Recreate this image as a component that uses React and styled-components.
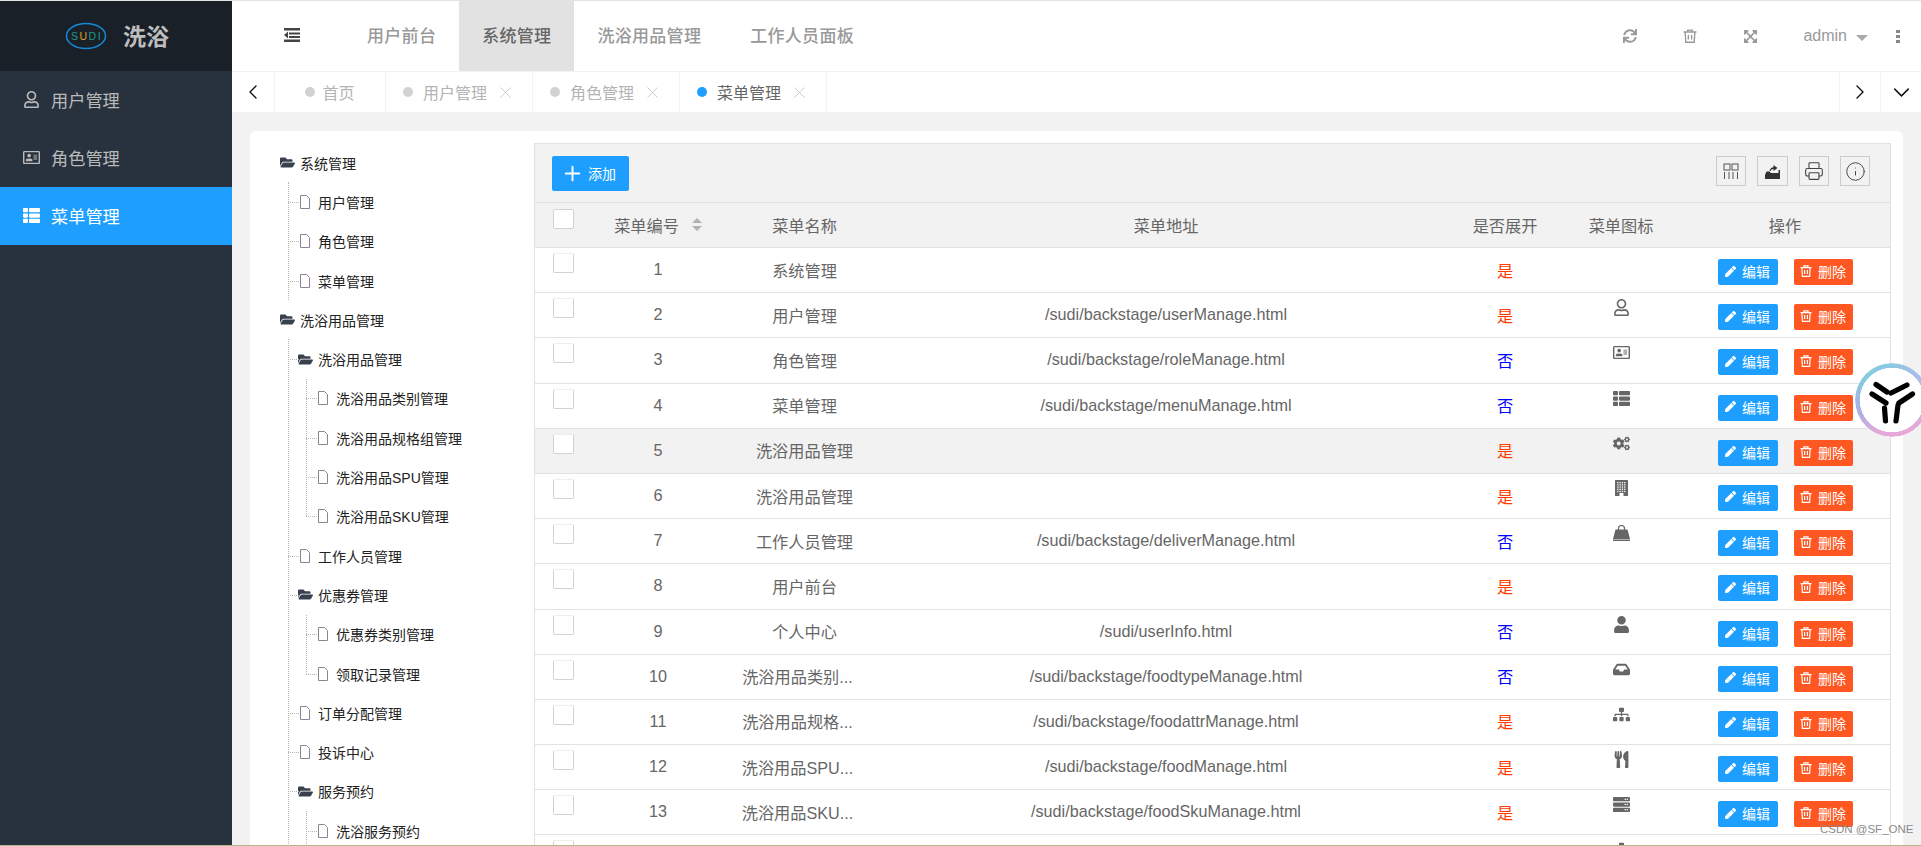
import React from "react";
import styled, { createGlobalStyle } from "styled-components";
import {
  FaRegUser, FaRegAddressCard, FaThList, FaCogs, FaUser, FaInbox,
  FaSitemap, FaUtensils, FaServer, FaFolderOpen, FaSync, FaExpandArrowsAlt, FaPen,
} from "react-icons/fa";
import { Printer, Info, ChevronLeft, ChevronRight, ChevronDown, X, Plus } from "lucide-react";

const Global = createGlobalStyle`
  html, body { margin: 0; padding: 0; background: #f2f2f2; }
  body { font-family: "Liberation Sans", "Noto Sans CJK SC", sans-serif; overflow: hidden; }
  * { box-sizing: border-box; }
`;

const sideItems = [
  { name: "用户管理", Icon: FaRegUser },
  { name: "角色管理", Icon: FaRegAddressCard },
  { name: "菜单管理", Icon: FaThList, active: true },
];

const tree = [
  { name: "系统管理", children: [{ name: "用户管理" }, { name: "角色管理" }, { name: "菜单管理" }] },
  {
    name: "洗浴用品管理",
    children: [
      {
        name: "洗浴用品管理",
        children: [
          { name: "洗浴用品类别管理" }, { name: "洗浴用品规格组管理" },
          { name: "洗浴用品SPU管理" }, { name: "洗浴用品SKU管理" },
        ],
      },
      { name: "工作人员管理" },
      { name: "优惠券管理", children: [{ name: "优惠券类别管理" }, { name: "领取记录管理" }] },
      { name: "订单分配管理" },
      { name: "投诉中心" },
      { name: "服务预约", open: true, children: [{ name: "洗浴服务预约" }] },
    ],
  },
];

function BuildingIcon() {
  const dots = [];
  for (let y = 2; y < 11; y += 2.2) {
    for (let x = 2.2; x < 11; x += 2.3) {
      dots.push(<rect key={`${x}-${y}`} x={x} y={y} width="1.3" height="1.3" fill="#fff" />);
    }
  }
  return (
    <svg width="13" height="16" viewBox="0 0 13 16">
      <rect width="13" height="16" rx="0.5" fill="#666" />
      {dots}
      <rect x="4.5" y="13" width="4" height="3" fill="#fff" />
    </svg>
  );
}

function BagIcon() {
  return (
    <svg width="17" height="16" viewBox="0 0 17 16" fill="#666">
      <path d="M5.500 6V3.500a3 3 0 0 1 6 0V6" fill="none" stroke="#666" strokeWidth="1.200" />
      <path d="M2.500 4.500h12L17 14H0z" />
      <rect y="14.500" width="17" height="1.500" />
    </svg>
  );
}

const rows = [
  { id: 1, name: "系统管理", url: "", open: true },
  { id: 2, name: "用户管理", url: "/sudi/backstage/userManage.html", open: true, Icon: FaRegUser },
  { id: 3, name: "角色管理", url: "/sudi/backstage/roleManage.html", open: false, Icon: FaRegAddressCard },
  { id: 4, name: "菜单管理", url: "/sudi/backstage/menuManage.html", open: false, Icon: FaThList },
  { id: 5, name: "洗浴用品管理", url: "", open: true, Icon: FaCogs, hover: true },
  { id: 6, name: "洗浴用品管理", url: "", open: true, Icon: BuildingIcon },
  { id: 7, name: "工作人员管理", url: "/sudi/backstage/deliverManage.html", open: false, Icon: BagIcon },
  { id: 8, name: "用户前台", url: "", open: true },
  { id: 9, name: "个人中心", url: "/sudi/userInfo.html", open: false, Icon: FaUser },
  { id: 10, name: "洗浴用品类别...", long: true, url: "/sudi/backstage/foodtypeManage.html", open: false, Icon: FaInbox },
  { id: 11, name: "洗浴用品规格...", long: true, url: "/sudi/backstage/foodattrManage.html", open: true, Icon: FaSitemap },
  { id: 12, name: "洗浴用品SPU...", long: true, url: "/sudi/backstage/foodManage.html", open: true, Icon: FaUtensils },
  { id: 13, name: "洗浴用品SKU...", long: true, url: "/sudi/backstage/foodSkuManage.html", open: true, Icon: FaServer },
];

function ShrinkIcon() {
  return (
    <svg width="16" height="14" viewBox="0 0 16 14" fill="#444">
      <rect x="0" y="0" width="16" height="2.500" />
      <rect x="5" y="4.500" width="11" height="2" />
      <rect x="5" y="8" width="11" height="2" />
      <rect x="0" y="11.500" width="16" height="2.500" />
      <path d="M4 3.500v7L0 7z" />
    </svg>
  );
}

function TrashIcon({ size = 12 }) {
  return (
    <svg width={size} height={size} viewBox="0 0 13 13" fill="none" stroke="currentColor" strokeWidth="1.300">
      <path d="M.5 2.800h12M4.300 2.800V1h4.400v1.800M2 2.800l.6 9.500h7.800l.6-9.500M5 5.300v4.500M8 5.300v4.500" />
    </svg>
  );
}

function ColsIcon() {
  return (
    <svg width="16" height="16" viewBox="0 0 16 16" fill="none" stroke="#555" strokeWidth="1">
      <rect x="1" y="1" width="6" height="6" />
      <rect x="9" y="1" width="6" height="6" />
      <path d="M1.500 9v7M6 9v7M10 9v7M14.500 9v7" />
    </svg>
  );
}

function ExportIcon() {
  return (
    <svg width="15" height="16" viewBox="0 0 15 16" fill="#333">
      <path d="M0 12l1.500-3.500h3L6 10h7.500V7H15v9H0z" />
      <path d="M4.500 8C5 5.500 6.500 4.300 8.500 4.200V2l4 3-4 3V6C7 6 6 6.800 5.500 8z" />
    </svg>
  );
}

function FileIcon() {
  return (
    <svg width="10" height="14" viewBox="0 0 10 14" fill="#fff" stroke="#8b8296" strokeWidth="1">
      <path d="M.5.5h6l3 3v10h-9z" />
    </svg>
  );
}

function TreeNode({ node, level }) {
  return (
    <div>
      <TreeRow $line={level > 0}>
        <TreeIcon $file={!node.children}>
          {node.children ? <FaFolderOpen size={15} color="#39414f" /> : <FileIcon />}
        </TreeIcon>
        {node.name}
      </TreeRow>
      {node.children && (
        <TreeChildren $short={level > 0 && !node.open}>
          {node.children.map((c, i) => <TreeNode key={i} node={c} level={level + 1} />)}
        </TreeChildren>
      )}
    </div>
  );
}

export default function App() {
  return (
    <Page>
      <Global />
      <Sidebar>
        <Brand>
          <svg width="42" height="28" viewBox="0 0 42 28">
            <ellipse cx="21" cy="14" rx="19.500" ry="12.500" fill="none" stroke="#1688d5" strokeWidth="1.500" />
            <text x="21.500" y="17.800" textAnchor="middle" fontSize="10.500" fontFamily="Liberation Sans" letterSpacing="1.500" fill="#1a9c8a">
              S<tspan fill="#e0a020">U</tspan>DI
            </text>
          </svg>
          <BrandName>洗浴</BrandName>
        </Brand>
        {sideItems.map(({ name, Icon, active }) => (
          <SideItem key={name} $active={active}>
            <Icon size={17} />
            {name}
          </SideItem>
        ))}
      </Sidebar>

      <Main>
        <TopBar>
          <ShrinkBtn><ShrinkIcon /></ShrinkBtn>
          <TopTab>用户前台</TopTab>
          <TopTab $active>系统管理</TopTab>
          <TopTab>洗浴用品管理</TopTab>
          <TopTab $shift>工作人员面板</TopTab>
          <TopRight>
            <TopIcon><FaSync size={14} /></TopIcon>
            <TopIcon><TrashIcon size={14} /></TopIcon>
            <TopIcon><FaExpandArrowsAlt size={15} /></TopIcon>
            <UserName>admin<Caret /></UserName>
            <MoreDots><i /><i /><i /></MoreDots>
          </TopRight>
        </TopBar>

        <TabsBar>
          <TabArrow $width={43}><ChevronLeft size={24} strokeWidth={1.4} color="#111" /></TabArrow>
          <PageTab $width={111} $tight><Dot />首页</PageTab>
          <PageTab $width={147}><Dot />用户管理<X size={19} strokeWidth={1} /></PageTab>
          <PageTab $width={147}><Dot />角色管理<X size={19} strokeWidth={1} /></PageTab>
          <PageTab $width={147} $active><Dot $active />菜单管理<X size={19} strokeWidth={1} /></PageTab>
          <TabsSpacer />
          <TabArrow $width={41} $left><ChevronRight size={24} strokeWidth={1.4} color="#111" /></TabArrow>
          <TabArrow $width={41} $left><ChevronDown size={27} strokeWidth={1.3} color="#111" /></TabArrow>
        </TabsBar>

        <Content>
          <Card>
            <Tree>
              {tree.map((n, i) => <TreeNode key={i} node={n} level={0} />)}
            </Tree>
            <TableBox>
              <Toolbar>
                <AddBtn><Plus size={23} strokeWidth={2} />添加</AddBtn>
                <ToolIcons>
                  <ToolBtn><ColsIcon /></ToolBtn>
                  <ToolBtn $wide><ExportIcon /></ToolBtn>
                  <ToolBtn><Printer size={20} strokeWidth={1.3} color="#444" /></ToolBtn>
                  <ToolBtn><Info size={21} strokeWidth={1} color="#333" /></ToolBtn>
                </ToolIcons>
              </Toolbar>
              <Row $head>
                <CheckCell $head><Check $head /></CheckCell>
                <Cell>菜单编号<SortMark /></Cell>
                <Cell>菜单名称</Cell>
                <Cell>菜单地址</Cell>
                <Cell>是否展开</Cell>
                <Cell>菜单图标</Cell>
                <Cell>操作</Cell>
              </Row>
              {rows.map((r) => (
                <Row key={r.id} $hover={r.hover}>
                  <CheckCell><Check /></CheckCell>
                  <Cell>{r.id}</Cell>
                  <Cell $long={r.long}>{r.name}</Cell>
                  <Cell>{r.url}</Cell>
                  <Cell><YesNo $yes={r.open}>{r.open ? "是" : "否"}</YesNo></Cell>
                  <IconCell>{r.Icon && <r.Icon size={17} />}</IconCell>
                  <ActionCell>
                    <ActionBtn><FaPen size={11} />编辑</ActionBtn>
                    <ActionBtn $danger><TrashIcon />删除</ActionBtn>
                  </ActionCell>
                </Row>
              ))}
              <Row>
                <CheckCell><Check /></CheckCell>
                <Cell />
                <Cell />
                <Cell />
                <Cell />
                <IconCell><FaSitemap size={17} /></IconCell>
                <Cell />
              </Row>
            </TableBox>
          </Card>
        </Content>
      </Main>

      <FloatBadge>
        <svg width="80" height="100" viewBox="0 0 80 100" fill="none" stroke="#000" strokeWidth="5.200" strokeLinecap="round">
          <path d="M35 34.500l11 7.500M50 43l16-8M31 44l14 9M43.500 58l1 13M71.500 44l-13.500 9M57 55l-2 16" />
        </svg>
      </FloatBadge>
      <Watermark>CSDN @SF_ONE</Watermark>
    </Page>
  );
}

const Page = styled.div`
  position: relative;
  display: flex;
  width: 1921px;
  height: 846px;
  overflow: hidden;
  border-top: 1px solid #e2e2e2;
  border-bottom: 1px solid #b9b48e;
`;
const Sidebar = styled.aside`
  width: 232px;
  flex: none;
  background: #28323e;
`;
const Brand = styled.div`
  height: 70px;
  background: #1a2028;
  display: flex;
  align-items: center;
  padding-left: 65px;
  gap: 16px;
`;
const BrandName = styled.span`
  font-size: 23px;
  font-weight: 700;
  color: #bdbdbd;
  padding-bottom: 3px;
`;
const SideItem = styled.div`
  height: 58px;
  display: flex;
  align-items: center;
  padding: 0 0 1px 23px;
  gap: 11px;
  font-size: 17.200px;
  color: ${(p) => (p.$active ? "#fff" : "#b9b9b9")};
  background: ${(p) => (p.$active ? "#1e9fff" : "transparent")};
`;
const Main = styled.div`
  flex: 1;
  min-width: 0;
  display: flex;
  flex-direction: column;
`;
const TopBar = styled.header`
  height: 70px;
  flex: none;
  display: flex;
  background: #fff;
`;
const ShrinkBtn = styled.div`
  width: 112px;
  display: flex;
  align-items: center;
  justify-content: center;
  padding: 0 0 2px 8px;
`;
const TopTab = styled.div`
  padding: 0 23px 3px;
  margin-left: ${(p) => (p.$shift ? "3px" : "0")};
  display: flex;
  align-items: center;
  font-size: 17px;
  font-weight: 500;
  letter-spacing: 0.3px;
  color: ${(p) => (p.$active ? "#666" : "#999")};
  background: ${(p) => (p.$active ? "#e2e2e2" : "transparent")};
`;
const TopRight = styled.div`
  margin-left: auto;
  display: flex;
  align-items: center;
  color: #999;
`;
const TopIcon = styled.div`
  width: 60px;
  display: flex;
  justify-content: center;
`;
const UserName = styled.div`
  display: flex;
  align-items: center;
  font-size: 16px;
  margin-left: 23px;
`;
const Caret = styled.i`
  margin: 3px 0 0 9px;
  border: 6px solid transparent;
  border-top-color: #aaa;
  border-bottom: 0;
`;
const MoreDots = styled.div`
  margin: 0 21px 0 28px;
  display: flex;
  flex-direction: column;
  gap: 2px;
  i {
    width: 4px;
    height: 3px;
    background: #888;
  }
`;
const TabsBar = styled.div`
  height: 41px;
  flex: none;
  display: flex;
  background: #fff;
  border-top: 1px solid #f2f2f2;
`;
const TabArrow = styled.div`
  width: ${(p) => p.$width}px;
  display: flex;
  align-items: center;
  justify-content: center;
  ${(p) => (p.$left ? "border-left: 1px solid #f2f2f2;" : "border-right: 1px solid #f2f2f2;")}
`;
const PageTab = styled.div`
  width: ${(p) => p.$width}px;
  display: flex;
  align-items: center;
  justify-content: center;
  gap: ${(p) => (p.$tight ? "7px" : "10px")};
  font-size: 16px;
  color: ${(p) => (p.$active ? "#666" : "#b4b4b4")};
  border-right: 1px solid #f2f2f2;
  svg {
    color: #c2c2c2;
    margin-left: -1px;
  }
`;
const Dot = styled.i`
  width: 10px;
  height: 10px;
  border-radius: 50%;
  background: ${(p) => (p.$active ? "#1e9fff" : "#d2d2d2")};
`;
const TabsSpacer = styled.div`
  flex: 1;
`;
const Content = styled.main`
  flex: 1;
  min-height: 0;
  padding: 19px 18px 0;
  background: #f2f2f2;
`;
const Card = styled.section`
  height: 100%;
  display: flex;
  padding: 12px 12px 0 30px;
  background: #fff;
  border-radius: 6px 6px 0 0;
`;
const Tree = styled.div`
  width: 254px;
  flex: none;
  font-size: 14px;
  color: #222;
`;
const TreeRow = styled.div`
  position: relative;
  height: 39.3px;
  display: flex;
  align-items: center;
  ${(p) => p.$line && `
    &::before {
      content: "";
      position: absolute;
      left: -10px;
      top: 50%;
      width: 11px;
      border-top: 1px dotted #b5b5b5;
    }
  `}
`;
const TreeIcon = styled.span`
  width: 20px;
  flex: none;
  display: flex;
  padding-left: ${(p) => (p.$file ? "2px" : "0")};
`;
const TreeChildren = styled.div`
  position: relative;
  padding-left: 18px;
  &::before {
    content: "";
    position: absolute;
    left: 8px;
    top: 0;
    bottom: ${(p) => (p.$short ? "19.6px" : "0")};
    border-left: 1px dotted #b5b5b5;
  }
`;
const TableBox = styled.div`
  width: 1357px;
  flex: none;
  border: 1px solid #e2e2e2;
  border-bottom: 0;
  color: #666;
  overflow: hidden;
`;
const Toolbar = styled.div`
  height: 59px;
  display: flex;
  align-items: flex-start;
  padding: 12px 20px 0 17px;
  background: #f2f2f2;
  border-bottom: 1px solid #e2e2e2;
`;
const AddBtn = styled.button`
  width: 77px;
  height: 35px;
  display: flex;
  align-items: center;
  justify-content: center;
  gap: 4px;
  border: 0;
  border-radius: 2px;
  padding: 0 4px 1px 0;
  font: inherit;
  font-size: 14px;
  color: #fff;
  background: #1e9fff;
`;
const ToolIcons = styled.div`
  margin-left: auto;
  display: flex;
  gap: 11px;
`;
const ToolBtn = styled.div`
  width: ${(p) => (p.$wide ? "31px" : "30px")};
  height: 30px;
  display: flex;
  align-items: center;
  justify-content: center;
  border: 1px solid #ccc;
`;
const Row = styled.div`
  display: grid;
  grid-template-columns: 46px 154px 139px 584px 94px 138px 190px;
  height: ${(p) => (p.$head ? "45px" : "45.2px")};
  font-size: 16.200px;
  border-bottom: 1px solid #e2e2e2;
  background: ${(p) => (p.$head || p.$hover ? "#f2f2f2" : "#fff")};
`;
const Cell = styled.div`
  display: flex;
  align-items: center;
  justify-content: center;
  min-width: 0;
  padding: 0 ${(p) => (p.$long ? "26px" : "12px")} 1px 12px;
  white-space: nowrap;
`;
const CheckCell = styled.div`
  padding: ${(p) => (p.$head ? "6px" : "5px")} 0 0 18px;
`;
const Check = styled.i`
  display: block;
  width: 21px;
  height: 20px;
  background: #fff;
  border: 1px solid #d2d2d2;
  border-top-color: ${(p) => (p.$head ? "#d2d2d2" : "#eee")};
  border-radius: 2px;
`;
const SortMark = styled.i`
  position: relative;
  width: 10px;
  height: 13px;
  margin-left: 13px;
  &::before,
  &::after {
    content: "";
    position: absolute;
    left: 0;
    border: 5px solid transparent;
  }
  &::before {
    top: -5px;
    border-bottom-color: #b2b2b2;
  }
  &::after {
    bottom: -5px;
    border-top-color: #b2b2b2;
  }
`;
const YesNo = styled.span`
  color: ${(p) => (p.$yes ? "#ff3c00" : "#0000ff")};
`;
const IconCell = styled.div`
  display: flex;
  justify-content: center;
  align-items: flex-start;
  padding-top: 6px;
  color: #666;
`;
const ActionCell = styled.div`
  display: flex;
  justify-content: center;
  align-items: flex-start;
  gap: 16px;
  padding-top: 11px;
`;
const ActionBtn = styled.button`
  width: ${(p) => (p.$danger ? "59px" : "60px")};
  height: 26px;
  display: flex;
  align-items: center;
  justify-content: center;
  gap: 6px;
  border: 0;
  border-radius: 2px;
  padding: 0 0 2px;
  font: inherit;
  font-size: 14px;
  color: #fff;
  background: ${(p) => (p.$danger ? "#ff5722" : "#1e9fff")};
`;
const FloatBadge = styled.div`
  position: absolute;
  left: 1855px;
  top: 362px;
  width: 74px;
  height: 74px;
  border-radius: 50%;
  background: #fff;
  &::before {
    content: "";
    position: absolute;
    inset: 0;
    border-radius: 50%;
    background: conic-gradient(#8cc8e4, #b8b8ea 70deg, #e8a8d8 150deg, #e6a8d8 200deg, #aeb0e6 250deg, #84cce0 310deg, #8cc8e4);
    -webkit-mask: radial-gradient(circle, transparent 32px, #000 32.500px);
    mask: radial-gradient(circle, transparent 32px, #000 32.500px);
  }
  svg {
    position: absolute;
    left: -14px;
    top: -13px;
  }
`;
const Watermark = styled.div`
  position: absolute;
  left: 1820px;
  top: 822px;
  font-size: 11.500px;
  white-space: nowrap;
  color: #8a8a8a;
`;
